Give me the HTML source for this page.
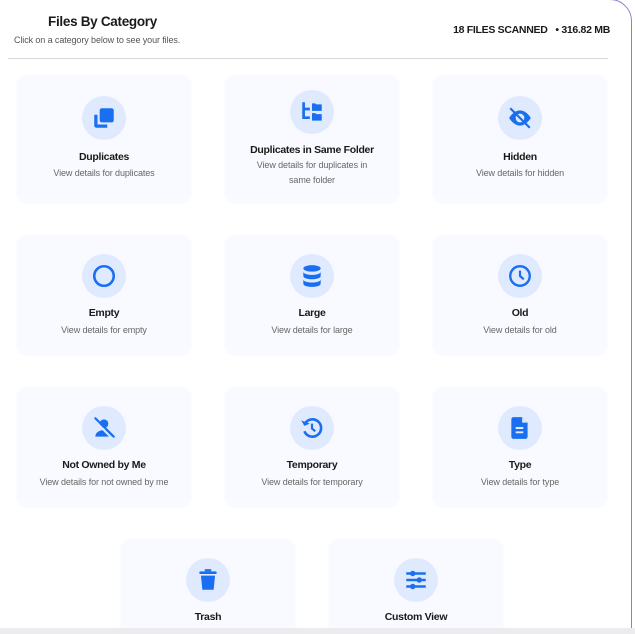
<!DOCTYPE html>
<html style="width:635px;height:634px;overflow:hidden"><head><style>
*{box-sizing:border-box;margin:0;padding:0}
body{width:635px;height:634px;overflow:hidden;background:#fff;font-family:"Liberation Sans",sans-serif;position:relative}
.frame{position:absolute;left:-30px;top:-1px;width:662px;height:640px;border:1.5px solid #8b7fd6;border-radius:0 22px 0 0}
.t{position:absolute;left:0;width:205px;top:14px;text-align:center;font-weight:bold;font-size:13.5px;color:#1a1a1a;letter-spacing:-0.3px}
.s{position:absolute;left:14px;top:35px;font-size:9px;color:#555;letter-spacing:-0.1px}
.r{position:absolute;right:25px;top:24px;font-size:10.5px;font-weight:bold;color:#1a1a1a;letter-spacing:-0.3px}
.hr{position:absolute;left:8px;top:58px;width:600px;height:1px;background:#d8d8dc}
.card{position:absolute;width:174px;background:#f8faff;border-radius:10px;text-align:center;box-shadow:0 0 3px rgba(240,243,250,.7)}
.ic{position:absolute;left:65px;width:44px;height:44px;border-radius:50%;background:#dfeaff;display:flex;align-items:center;justify-content:center}
.ct{position:absolute;left:0;right:0;font-weight:bold;font-size:10.5px;color:#1a1a1a;letter-spacing:-0.3px}
.cd{position:absolute;left:10px;right:10px;font-size:9px;color:#666;line-height:15px;letter-spacing:-0.1px}
.bot{position:absolute;left:0;top:628px;width:635px;height:6px;background:#ececef}
svg{width:26px;height:26px;fill:#1a6ff0}
</style></head><body>
<div class="frame"></div>
<div class="t">Files By Category</div>
<div class="s">Click on a category below to see your files.</div>
<div class="r">18 FILES SCANNED &nbsp;&nbsp;• 316.82 MB</div>
<div class="hr"></div>

<div class="card" style="left:17px;top:76px;height:127px">
<div class="ic" style="top:20px"><svg viewBox="0 0 24 24"><rect x="8" y="3" width="13" height="13" rx="2"/><path d="M3 9v10a2 2 0 0 0 2 2h10v-3H6V9z"/></svg></div>
<div class="ct" style="top:75px">Duplicates</div><div class="cd" style="top:90px">View details for duplicates</div></div>

<div class="card" style="left:225px;top:76px;height:127px">
<div class="ic" style="top:14px"><svg viewBox="0 0 24 24"><path d="M3 3h2.5v13H10v2.5H3z M3 8h7v2.5H3z"/><path d="M12 4h3l1 1h5v6h-9z M12 13h3l1 1h5v6h-9z"/></svg></div>
<div class="ct" style="top:68px">Duplicates in Same Folder</div><div class="cd" style="top:82px;left:25px;right:25px">View details for duplicates in same folder</div></div>

<div class="card" style="left:433px;top:76px;height:127px">
<div class="ic" style="top:20px"><svg viewBox="0 0 24 24"><path d="M12 5C6 5 2 12 2 12s4 7 10 7 10-7 10-7-4-7-10-7zm0 11a4 4 0 1 1 0-8 4 4 0 0 1 0 8z"/><path d="M3 3l18 18" stroke="#1a6ff0" stroke-width="2"/></svg></div>
<div class="ct" style="top:75px">Hidden</div><div class="cd" style="top:90px">View details for hidden</div></div>

<div class="card" style="left:17px;top:236px;height:119px">
<div class="ic" style="top:18px"><svg viewBox="0 0 24 24"><circle cx="12" cy="12" r="9" fill="none" stroke="#1a6ff0" stroke-width="2.4"/></svg></div>
<div class="ct" style="top:71px">Empty</div><div class="cd" style="top:87px">View details for empty</div></div>

<div class="card" style="left:225px;top:236px;height:119px">
<div class="ic" style="top:18px"><svg viewBox="0 0 24 24"><ellipse cx="12" cy="5" rx="8" ry="3"/><path d="M4 8c0 2 3.6 3 8 3s8-1 8-3v4c0 2-3.6 3-8 3s-8-1-8-3z M4 15c0 2 3.6 3 8 3s8-1 8-3v4c0 2-3.6 3-8 3s-8-1-8-3z"/></svg></div>
<div class="ct" style="top:71px">Large</div><div class="cd" style="top:87px">View details for large</div></div>

<div class="card" style="left:433px;top:236px;height:119px">
<div class="ic" style="top:18px"><svg viewBox="0 0 24 24"><circle cx="12" cy="12" r="9" fill="none" stroke="#1a6ff0" stroke-width="2.2"/><path d="M12 7v5l3.5 3" fill="none" stroke="#1a6ff0" stroke-width="2"/></svg></div>
<div class="ct" style="top:71px">Old</div><div class="cd" style="top:87px">View details for old</div></div>

<div class="card" style="left:17px;top:388px;height:119px">
<div class="ic" style="top:18px"><svg viewBox="0 0 24 24"><circle cx="12" cy="8" r="4"/><path d="M4 20c0-4 4-6 8-6s8 2 8 6z"/><path d="M3 5l16 16" stroke="#dfeaff" stroke-width="2"/><path d="M4 3l17 17" stroke="#1a6ff0" stroke-width="2" stroke-linecap="round"/></svg></div>
<div class="ct" style="top:71px">Not Owned by Me</div><div class="cd" style="top:87px;left:0;right:0;white-space:nowrap">View details for not owned by me</div></div>

<div class="card" style="left:225px;top:388px;height:119px">
<div class="ic" style="top:18px"><svg viewBox="0 0 24 24"><path d="M5 9a8 8 0 1 1 0 6" fill="none" stroke="#1a6ff0" stroke-width="2.4"/><path d="M2 5l3 5 5-2z"/><path d="M12 8v4.5l3 2.5" fill="none" stroke="#1a6ff0" stroke-width="2"/></svg></div>
<div class="ct" style="top:71px">Temporary</div><div class="cd" style="top:87px">View details for temporary</div></div>

<div class="card" style="left:433px;top:388px;height:119px">
<div class="ic" style="top:18px"><svg viewBox="0 0 24 24"><path d="M6 2h8l5 5v13a2 2 0 0 1-2 2H6a2 2 0 0 1-2-2V4a2 2 0 0 1 2-2z"/><path d="M14 2v5h5" fill="#dfeaff"/><path d="M8 12h7M8 16h7" stroke="#dfeaff" stroke-width="1.8"/></svg></div>
<div class="ct" style="top:71px">Type</div><div class="cd" style="top:87px">View details for type</div></div>

<div class="card" style="left:121px;top:540px;height:100px">
<div class="ic" style="top:18px"><svg viewBox="0 0 24 24"><rect x="4" y="4" width="16" height="2.5" rx="1"/><rect x="9" y="2" width="6" height="2"/><path d="M5.5 8h13l-1.3 13H6.8z"/></svg></div>
<div class="ct" style="top:71px">Trash</div></div>

<div class="card" style="left:329px;top:540px;height:100px">
<div class="ic" style="top:18px"><svg viewBox="0 0 24 24"><path d="M3 6h18M3 12h18M3 18h18" stroke="#1a6ff0" stroke-width="2.2"/><circle cx="9" cy="6" r="2.5"/><circle cx="15" cy="12" r="2.5"/><circle cx="9" cy="18" r="2.5"/></svg></div>
<div class="ct" style="top:71px">Custom View</div></div>

<div class="bot"></div>
</body></html>
